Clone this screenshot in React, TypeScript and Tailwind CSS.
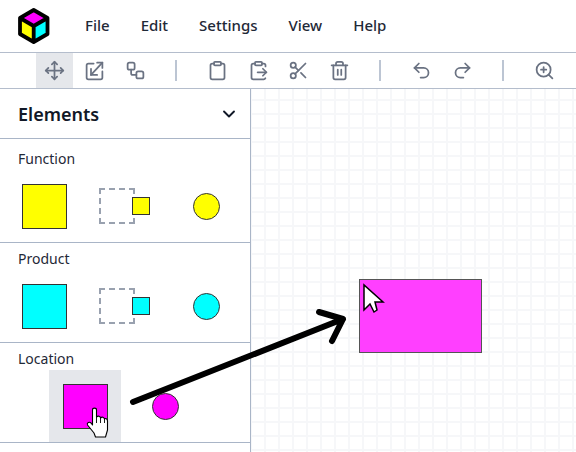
import { ChevronDown, Clipboard, ClipboardPaste, Move, Redo2, Scissors, Trash2, Undo2, Workflow, ZoomIn, ZoomOut } from 'lucide-react'
import type { ReactNode } from 'react'

const menus = ['File', 'Edit', 'Settings', 'View', 'Help']

function ToolButton({ children, active }: { children: ReactNode; active?: boolean }) {
  return (
    <button className={`flex h-[35px] w-[36.5px] shrink-0 items-center justify-center text-gray-500 ${active ? 'bg-gray-200' : ''}`}>
      {children}
    </button>
  )
}

function Separator() {
  return (
    <div className="flex w-[38px] shrink-0 justify-center pr-[2px]">
      <div className="h-[21px] w-[2px] bg-[#bcc5d3]" />
    </div>
  )
}

function Logo() {
  return (
    <svg width="36" height="38" viewBox="0 0 36 38" className="shrink-0">
      <path d="M18.7 3 L32.5 11 L18.7 19 L5 11 Z" fill="#ff00ff" />
      <path d="M5 11 L18.7 19 V35 L5 27 Z" fill="#ffff00" />
      <path d="M32.5 11 L18.7 19 V35 L32.5 27 Z" fill="#00ffff" />
      <path d="M18.7 3 L32.5 11 V27 L18.7 35 L5 27 V11 Z M5 11 L18.7 19 L32.5 11 M18.7 19 V35" fill="none" stroke="#000" strokeWidth="3.8" strokeLinejoin="round" />
    </svg>
  )
}

function ResizeIcon() {
  return (
    <svg width="21" height="21" viewBox="0 0 24 24" fill="none" stroke="currentColor" strokeWidth="2" strokeLinecap="round" strokeLinejoin="round">
      <path d="M11 4H5a2 2 0 0 0-2 2v14a2 2 0 0 0 2 2h14a2 2 0 0 0 2-2v-7" />
      <path d="M21 3 8 17" />
      <path d="M15 3h6v6" />
      <path d="M8 10v7h7" />
    </svg>
  )
}

function Shapes({ label, square, circle, first, port = true, hoverFirst }: {
  label: string
  square: string
  circle: string
  first?: boolean
  port?: boolean
  hoverFirst?: boolean
}) {
  return (
    <section className={`border-b border-[#a9b5c7] ${first ? 'pt-[10px]' : 'pt-[6px]'}`}>
      <div className="mb-px px-[18px] text-sm leading-5 text-[#1f2937]">{label}</div>
      <div className="flex justify-center gap-[9px]">
        <div className={`flex h-[72px] w-[72px] items-center justify-center ${hoverFirst ? 'bg-gray-200 pl-px' : ''}`}>
          <div className={`h-[45px] w-[45px] border border-[#333] ${square}`} />
        </div>
        {port && (
          <div className="flex h-[72px] w-[72px] items-center justify-center pr-[2px]">
            <div className="h-[36px] w-[36px] border-2 border-dashed border-gray-400" />
            <div className={`-ml-[3px] h-[18px] w-[18px] border border-[#333] ${square}`} />
          </div>
        )}
        <div className="flex h-[72px] w-[72px] items-center justify-center">
          <div className={`h-[27px] w-[27px] rounded-full border-[1.5px] border-[#333] ${circle}`} />
        </div>
      </div>
    </section>
  )
}

export default function App() {
  return (
    <div className="relative flex h-[452px] w-[576px] flex-col overflow-hidden bg-white font-['Noto_Sans',sans-serif] text-[#111827]">
      <header className="flex h-[53px] shrink-0 items-center border-b border-[#b4bdcc] pl-[15px]">
        <Logo />
        <nav className="mb-[2px] ml-[34px] flex gap-[31px] text-[15px] font-medium leading-5">
          {menus.map((m) => (
            <span key={m} className="text-[#1f2937]">{m}</span>
          ))}
        </nav>
      </header>

      <div className="flex h-9 shrink-0 items-center gap-1 overflow-hidden border-b border-[#b4bdcc] pl-9">
        <ToolButton active><Move size={21} strokeWidth={2} /></ToolButton>
        <ToolButton><ResizeIcon /></ToolButton>
        <ToolButton><Workflow size={21} strokeWidth={2} /></ToolButton>
        <Separator />
        <ToolButton><Clipboard size={21} strokeWidth={2} /></ToolButton>
        <ToolButton><ClipboardPaste size={21} strokeWidth={2} /></ToolButton>
        <ToolButton><Scissors size={21} strokeWidth={2} /></ToolButton>
        <ToolButton><Trash2 size={21} strokeWidth={2} /></ToolButton>
        <Separator />
        <ToolButton><Undo2 size={21} strokeWidth={2} /></ToolButton>
        <ToolButton><Redo2 size={21} strokeWidth={2} /></ToolButton>
        <Separator />
        <ToolButton><ZoomIn size={21} strokeWidth={2} /></ToolButton>
        <ToolButton><ZoomOut size={21} strokeWidth={2} /></ToolButton>
      </div>

      <div className="flex min-h-0 flex-1">
        <aside className="w-[251px] shrink-0 border-r border-[#a9b5c7]">
          <div className="flex h-[50px] items-center justify-between border-b border-[#a9b5c7] pl-[18px] pr-[11px]">
            <span className="text-lg font-semibold text-[#111827]">Elements</span>
            <ChevronDown size={20} strokeWidth={2.25} className="text-[#111827]" />
          </div>
          <Shapes first label="Function" square="bg-[#ffff00]" circle="bg-[#ffff00]" />
          <Shapes label="Product" square="bg-[#00ffff]" circle="bg-[#00ffff]" />
          <Shapes label="Location" square="bg-[#ff00ff]" circle="bg-[#ff00ff]" port={false} hoverFirst />
        </aside>

        <main className="flex-1 bg-white bg-[linear-gradient(#f6f7f9_2px,transparent_2px),linear-gradient(90deg,#f6f7f9_2px,transparent_2px)] bg-[size:14px_14px] bg-[position:-1px_10px]">
          <div className="ml-[108px] mt-[190px] h-[74px] w-[123px] border border-[#555] bg-[#ff3fff]" />
        </main>
      </div>

      {/* the arrow and the two cursors are annotations lying over the app */}
      <svg className="pointer-events-none absolute left-0 top-0" width="576" height="452" viewBox="0 0 576 452">
        <path d="M133 402 L343 319 M319 312 L343 319 L332 341" fill="none" stroke="#000" strokeWidth="6" strokeLinecap="round" strokeLinejoin="round" />
        <path d="M364 285 V310 L370 304 L374 312 L377 310 L375 302 L383 302 Z" fill="#fff" stroke="#000" strokeWidth="1.5" />
        <path d="M92.5 410 C92.5 407.5 96.5 407.5 96.5 410 V417 C98 415.5 100.5 416 100.5 418 C102 416.5 104 417 104.5 419 C105.5 418 107.5 418.5 107.5 421 V430 L105.5 437 H95.5 L94 433 L87.5 425 C86.5 422.5 89.5 421.5 91 423 L92.5 425 Z" fill="#fff" stroke="#000" strokeWidth="1.1" strokeLinejoin="round" />
        <path d="M96.5 417 V423 M100.5 418 V423 M104.5 419 V423" stroke="#000" strokeWidth="0.9" />
      </svg>
    </div>
  )
}
